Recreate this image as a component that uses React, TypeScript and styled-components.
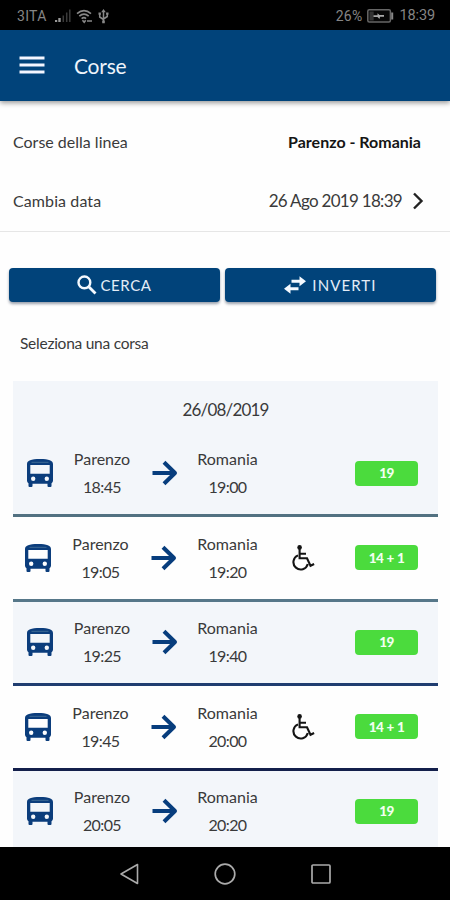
import React from "react";
import styled, { createGlobalStyle } from "styled-components";

const NAVY = "#01437a";

const GlobalStyle = createGlobalStyle`
  *, *::before, *::after { box-sizing: border-box; }
  body { margin: 0; background: #fff; }
  svg { display: block; flex: none; }
`;

const Screen = styled.div`
  width: 450px;
  height: 900px;
  display: flex;
  flex-direction: column;
  overflow: hidden;
  background: #fefefe;
  color: #3a3a3a;
  font-family: Lato, "Open Sans", sans-serif;
`;

const Label = styled.span<{ $size?: number; $track?: number; $weight?: number; $color?: string }>`
  font-size: ${(p) => p.$size ?? 16}px;
  letter-spacing: ${(p) => p.$track ?? 0}px;
  font-weight: ${(p) => p.$weight ?? 400};
  color: ${(p) => p.$color ?? "inherit"};
  line-height: 20px;
  white-space: nowrap;
`;

const StatusBar = styled.header`
  flex: none;
  height: 30px;
  padding: 2px 15px 0 17px;
  display: flex;
  align-items: center;
  justify-content: space-between;
  background: #000;
  color: #858585;
  font-family: Roboto, sans-serif;
`;

const StatusGroup = styled.div<{ $gap: number }>`
  display: flex;
  align-items: center;
  gap: ${(p) => p.$gap}px;
`;

const AppBar = styled.div`
  flex: none;
  z-index: 1;
  height: 70.5px;
  padding: 1px 19px 0;
  display: flex;
  align-items: center;
  gap: 29px;
  background: ${NAVY};
  color: #eef4fb;
  box-shadow: 0 2px 5px rgba(0, 0, 0, 0.4);
`;

const Content = styled.main`
  flex: 1;
  min-height: 0;
  overflow: hidden;
`;

const Details = styled.section`
  height: 131.5px;
  padding: 11.5px 26px 0 13px;
  border-bottom: 1.5px solid #e6e6e6;
`;

const DetailRow = styled.div`
  height: 59px;
  display: flex;
  align-items: center;
  justify-content: space-between;
`;

const LineName = styled.div`
  padding-right: 3px;
`;

const DateValue = styled.div`
  display: flex;
  align-items: center;
  gap: 11px;
`;

const Actions = styled.div`
  display: grid;
  grid-template-columns: 1fr 1fr;
  gap: 5px;
  padding: 35.5px 14px 0 9px;
`;

const ActionButton = styled.button<{ $gap: number }>`
  height: 34.5px;
  padding: 0;
  border: 0;
  border-radius: 4px;
  display: flex;
  align-items: center;
  justify-content: center;
  gap: ${(p) => p.$gap}px;
  font-family: inherit;
  color: #e3edf7;
  background: ${NAVY};
  box-shadow: 0 2px 3px rgba(0, 20, 50, 0.4);
`;

const Hint = styled.div`
  height: 79px;
  padding: 31px 0 0 20px;
  display: flex;
  align-items: flex-start;
`;

const Board = styled.section`
  margin: 0 12px 0 13px;
`;

const DateHeading = styled.div`
  height: 51.5px;
  padding-top: 6px;
  display: flex;
  align-items: center;
  justify-content: center;
  background: #f3f6fa;
`;

const TripRow = styled.article<{ $shaded: boolean; $line: string }>`
  height: 84.5px;
  padding-left: ${(p) => (p.$shaded ? 1 : 0)}px;
  display: grid;
  grid-template-columns: ${(p) => (p.$shaded ? "51px 74px 51px 75px 76px 91px" : "50px 75px 52px 75px 76px 91px")};
  align-items: center;
  justify-items: center;
  background: ${(p) => (p.$shaded ? "#f3f6fa" : "#fefefe")};
  border-bottom: 3px solid ${(p) => p.$line};
`;

const Stop = styled.div`
  display: flex;
  flex-direction: column;
  align-items: center;
  gap: 8px;
`;

const SeatBadge = styled.span`
  width: 63px;
  height: 25px;
  border-radius: 4px;
  display: flex;
  align-items: center;
  justify-content: center;
  background: #4bdb3d;
  color: #f2fff0;
  font-size: 13.5px;
  font-weight: 900;
  letter-spacing: -0.5px;
  word-spacing: 0.5px;
`;

const NavBar = styled.footer`
  flex: none;
  height: 53px;
  padding: 1px 119px 0 119px;
  display: flex;
  align-items: center;
  justify-content: space-between;
  background: #000;
`;

const Signal = () => (
  <svg width="16" height="14" viewBox="0 0 16 14">
    <path d="M1 13v-2M4.5 13V9" stroke="#999" strokeWidth="2.4" />
    <path d="M8.3 13V6.5M11.7 13V3.5M14.8 13V0.5" stroke="#3b3b3b" strokeWidth="1.5" />
  </svg>
);

const Wifi = () => (
  <svg width="17" height="15" viewBox="0 0 17 15" fill="none" stroke="#888" strokeWidth="1.7">
    <path d="M1 4.6Q8 -1.2 15 4.6M3.3 7.2Q8 3.2 12.7 7.2M5.6 9.6Q8 7.7 10 9.6" />
    <path d="M6.5 11.300l1.700 2 1.500-2M11 12h5" strokeWidth="1.600" />
  </svg>
);

const Usb = () => (
  <svg width="11" height="15" viewBox="0 0 11 15" fill="none" stroke="#888" strokeWidth="1.5">
    <path d="M5.5 2v11M1.7 5v3l3.8 2.5M9.3 4.5v3L5.5 10" />
    <path d="M5.5 0l2.300 3.200H3.200zM.5 3.6h2.4v2.2H.5zM8.1 3.6h2.4v2.2H8.1zM4.2 11.5h2.6v2.8H4.2z" fill="#888" stroke="none" />
  </svg>
);

const Battery = () => (
  <svg width="27" height="14" viewBox="0 0 27 14">
    <rect x="0.8" y="0.8" width="22.6" height="12.2" rx="1.5" fill="#080808" stroke="#666" strokeWidth="1.5" />
    <path d="M2.5 2.5h4.2v9H2.5z" fill="#333" />
    <path d="M6.5 6.200h4V4.200l2 1.800h4.500v1.800h-4l-.5 2.200-2-2h-4z" fill="#aaa" />
    <path d="M25.2 3.5v7" stroke="#888" strokeWidth="2" />
  </svg>
);

const Menu = () => (
  <svg width="26" height="19" viewBox="0 0 26 19">
    <path d="M.5 2h25M.5 9h25M.5 16h25" stroke="#f4f6ff" strokeWidth="3" />
  </svg>
);

const Chevron = () => (
  <svg width="11" height="18" viewBox="0 0 11 18" fill="none" stroke="#222" strokeWidth="2.4">
    <path d="M1 1.5L8.500 9 1 16.500" />
  </svg>
);

const Search = () => (
  <svg width="20" height="20" viewBox="0 0 20 20" fill="none" stroke="#f4f9ff">
    <circle cx="7.4" cy="7.4" r="5.9" strokeWidth="2.4" />
    <path d="M11.5 11.5l7 7" strokeWidth="2.9" />
  </svg>
);

const Swap = () => (
  <svg width="22" height="18" viewBox="0 0 22 18" fill="#f4f9ff">
    <path d="M7.5 3.800h8V.3L22 5.300l-6.500 5V6.800h-8z" />
    <path d="M14.500 11.200h-8V7.700L0 12.700l6.500 5v-3.500h8z" />
  </svg>
);

const Bus = () => (
  <svg width="26" height="28" viewBox="0 0 26 28">
    <path
      fill="#0b3d7c"
      fillRule="evenodd"
      d="M0 5C0 1.500 4 0 13 0s13 1.500 13 5v16.500c0 1.300-.6 2-1.500 2.800V27a1 1 0 0 1-1 1h-2a1 1 0 0 1-1-1v-2.200h-15V27a1 1 0 0 1-1 1h-2a1 1 0 0 1-1-1v-2.700C.6 23.500 0 22.800 0 21.500zM3.300 6v8.700h19.400V6zM6.200 17.500a2.200 2.200 0 1 0 0 4.400 2.200 2.200 0 0 0 0-4.400zM19.800 17.500a2.200 2.200 0 1 0 0 4.400 2.200 2.200 0 0 0 0-4.400z"
    />
    <path d="M4.500 3.300h17" stroke="#3e6b94" strokeWidth="1" />
  </svg>
);

const Arrow = () => (
  <svg width="26" height="26" viewBox="0 0 26 26" fill="none" stroke="#073d7d" strokeWidth="4">
    <path d="M.5 13h22M12 2.2L23 13 12 23.8" strokeLinejoin="round" />
  </svg>
);

const Wheelchair = () => (
  <svg width="23" height="26" viewBox="0 0 23 26" fill="none" stroke="#141414" strokeWidth="2.100">
    <circle cx="7.6" cy="2.4" r="2.3" fill="#141414" stroke="none" />
    <path d="M7.600 4v9.300h7.400l3.500 7.500 3.600-1.800M8 8.700h6" />
    <path d="M6 10.400A7.300 7.300 0 1 0 15.800 19" />
  </svg>
);

interface Trip {
  departs: string;
  arrives: string;
  seats: string;
  accessible: boolean;
  line: string;
}

const trips: Trip[] = [
  { departs: "18:45", arrives: "19:00", seats: "19", accessible: false, line: "#527181" },
  { departs: "19:05", arrives: "19:20", seats: "14 + 1", accessible: true, line: "#567789" },
  { departs: "19:25", arrives: "19:40", seats: "19", accessible: false, line: "#203d70" },
  { departs: "19:45", arrives: "20:00", seats: "14 + 1", accessible: true, line: "#131f4b" },
  { departs: "20:05", arrives: "20:20", seats: "19", accessible: false, line: "#131f4b" },
];

const TripStop = ({ place, time }: { place: string; time: string }) => (
  <Stop>
    <Label $track={0}>{place}</Label>
    <Label $track={-0.6}>{time}</Label>
  </Stop>
);

export default function App() {
  return (
    <>
      <GlobalStyle />
      <Screen>
        <StatusBar>
          <StatusGroup $gap={8}>
            <Label $size={14} $track={0.3}>3ITA</Label>
            <StatusGroup $gap={5}>
              <Signal />
              <Wifi />
              <Usb />
            </StatusGroup>
          </StatusGroup>
          <StatusGroup $gap={5}>
            <Label $size={14} $track={0.2}>26%</Label>
            <Battery />
            <Label $size={14.5} $track={-0.1}>18:39</Label>
          </StatusGroup>
        </StatusBar>
        <AppBar>
          <Menu />
          <Label $size={21} $track={-0.2}>Corse</Label>
        </AppBar>
        <Content>
          <Details>
            <DetailRow>
              <Label>Corse della linea</Label>
              <LineName>
                <Label $weight={700} $color="#151515">Parenzo - Romania</Label>
              </LineName>
            </DetailRow>
            <DetailRow>
              <Label $track={0.1}>Cambia data</Label>
              <DateValue>
                <Label $size={17} $track={-0.7}>26 Ago 2019 18:39</Label>
                <Chevron />
              </DateValue>
            </DetailRow>
          </Details>
          <Actions>
            <ActionButton $gap={3}>
              <Search />
              <Label $size={15} $track={0.6}>CERCA</Label>
            </ActionButton>
            <ActionButton $gap={6}>
              <Swap />
              <Label $size={15} $track={1.1}>INVERTI</Label>
            </ActionButton>
          </Actions>
          <Hint>
            <Label $size={15.5} $track={-0.25}>Seleziona una corsa</Label>
          </Hint>
          <Board>
            <DateHeading>
              <Label $size={17} $track={-0.8}>26/08/2019</Label>
            </DateHeading>
            {trips.map((trip, i) => (
              <TripRow key={trip.departs} $shaded={i % 2 === 0} $line={trip.line}>
                <Bus />
                <TripStop place="Parenzo" time={trip.departs} />
                <Arrow />
                <TripStop place="Romania" time={trip.arrives} />
                {trip.accessible ? <Wheelchair /> : <span />}
                <SeatBadge>{trip.seats}</SeatBadge>
              </TripRow>
            ))}
          </Board>
        </Content>
        <NavBar>
          <svg width="20" height="22" viewBox="0 0 20 22" fill="none" stroke="#aaa" strokeWidth="1.6">
            <path d="M18.5 1.500v19L2 11z" strokeLinejoin="round" />
          </svg>
          <svg width="22" height="22" viewBox="0 0 22 22" fill="none" stroke="#aaa" strokeWidth="1.7">
            <circle cx="11" cy="11" r="9.8" />
          </svg>
          <svg width="20" height="20" viewBox="0 0 20 20" fill="none" stroke="#aaa" strokeWidth="1.7">
            <rect x="1" y="1" width="18" height="18" rx="1" />
          </svg>
        </NavBar>
      </Screen>
    </>
  );
}
